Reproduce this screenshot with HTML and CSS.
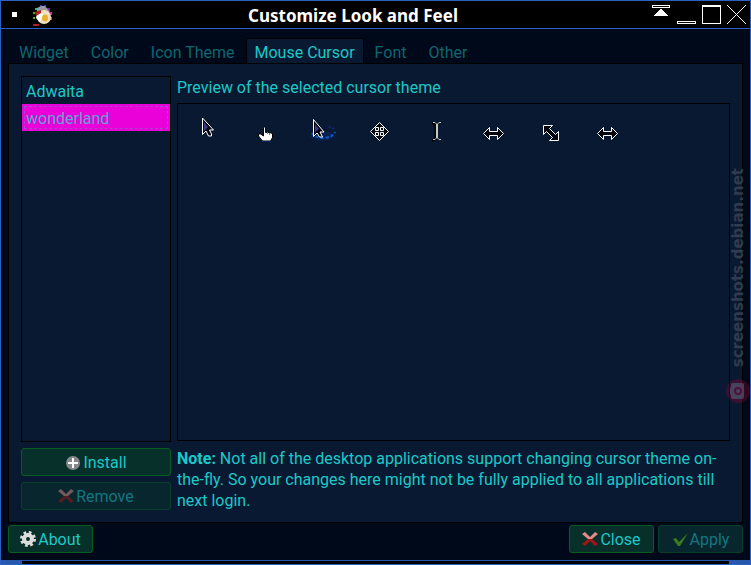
FILE: index.html
```html
<!DOCTYPE html>
<html lang="en">
<head>
    <meta charset="UTF-8">
    <meta name="viewport" content="width=device-width, initial-scale=1.0">
    <title>Customize Look and Feel</title>
    <link rel="stylesheet" href="styles.css">
</head>
<body>
    <div class="window">
        <header class="titlebar">
            <div class="title-left">
                <span class="sticky"></span>
                <svg class="app-icon" width="22" height="22" viewBox="0 0 22 22">
                    <path fill="#2ab5a8" d="M3 4h2v2H3z"/>
                    <path fill="#1838d0" d="M8 1h2v2H8zM12 1h2v2h-2z"/>
                    <path fill="#7a22b0" d="M15 4h3v3h-3z"/>
                    <path fill="#58b010" d="M1 8h2v2H1zM1 13h2v2H1z"/>
                    <path fill="#d820a0" d="M18 8h2v3h-2z"/>
                    <path fill="#d85a20" d="M18 13h2v3h-2z"/>
                    <path fill="#9a9aa0" d="M5 4l4-2 4 0 5 6-4 4-9-3z"/>
                    <circle cx="12" cy="13" r="7" fill="#f0e2c0"/>
                    <ellipse cx="13" cy="14" rx="3" ry="3.5" fill="#e8b030"/>
                    <path fill="#fff" d="M5 9l6 1-3 8-4-4z"/>
                    <path fill="#b02020" d="M3 8l6-2v3l-5 3zM1 20h6v2H1z"/>
                </svg>
            </div>
            <h1 class="title">Customize Look and Feel</h1>
            <div class="title-buttons">
                <button class="win-button" type="button" aria-label="Shade">
                    <svg width="19" height="19" viewBox="0 0 19 19" shape-rendering="crispEdges">
                        <path fill="none" stroke="#fff" d="M.5.5h17v2H.5z"/>
                        <path fill="#fff" d="M8 4h2v1h1v1h1v1h1v1h1v1h1v1h1v1H2v-1h1V9h1V8h1V7h1V6h1V5h1z"/>
                    </svg>
                </button>
                <button class="win-button" type="button" aria-label="Minimize">
                    <svg width="19" height="19" viewBox="0 0 19 19" shape-rendering="crispEdges">
                        <path fill="none" stroke="#fff" d="M.5 16.5h18v2H.5z"/>
                    </svg>
                </button>
                <button class="win-button" type="button" aria-label="Maximize">
                    <svg width="19" height="19" viewBox="0 0 19 19" shape-rendering="crispEdges">
                        <path fill="none" stroke="#fff" d="M.5.5h18v18H.5zM0 1.5h19"/>
                    </svg>
                </button>
                <button class="win-button" type="button" aria-label="Close window">
                    <svg width="19" height="19" viewBox="0 0 19 19" shape-rendering="crispEdges">
                        <path fill="none" stroke="#fff" d="M0 0l19 19M19 0L0 19"/>
                    </svg>
                </button>
            </div>
        </header>

        <main class="content">
            <nav class="tabs" role="tablist">
                <button class="tab" type="button" role="tab">Widget</button>
                <button class="tab" type="button" role="tab">Color</button>
                <button class="tab" type="button" role="tab">Icon Theme</button>
                <button class="tab active" type="button" role="tab" aria-selected="true">Mouse Cursor</button>
                <button class="tab" type="button" role="tab">Font</button>
                <button class="tab" type="button" role="tab">Other</button>
            </nav>

            <section class="panel">
                <div class="themes">
                    <ul class="theme-list">
                        <li class="theme">Adwaita</li>
                        <li class="theme selected">wonderland</li>
                    </ul>
                    <button class="button" type="button">
                        <svg class="icon" width="16" height="16" viewBox="0 0 16 16">
                            <circle cx="8" cy="9" r="7" fill="#85888a"/>
                            <path stroke="#fff" stroke-width="2" d="M8 4v10M3 9h10"/>
                        </svg>
                        Install
                    </button>
                    <button class="button" type="button" disabled>
                        <svg class="icon" width="16" height="16" viewBox="0 0 16 16">
                            <path fill="#e08a8a" d="M0 3l3-2 5 5 5-5 3 2-6 5H6z"/>
                            <path fill="#a01414" d="M6 8h4l6 5-3 2-5-5-5 5-3-2z"/>
                        </svg>
                        Remove
                    </button>
                </div>

                <div class="details">
                    <h2 class="label">Preview of the selected cursor theme</h2>
                    <div class="preview">
                        <svg width="57" height="50" viewBox="0 0 57 50">
                            <path class="cursor" d="M24.5 14v16.500l3.500-3.500 2.500 5h3v-2l-2-4h4z"/>
                            <path fill="#3a3a88" d="M26 18l4 5-4 4z"/>
                        </svg>
                        <svg width="57" height="50" viewBox="0 0 57 50">
                            <path fill="#1040a8" d="M27 36h9v2h-9z"/>
                            <path fill="#fff" stroke="#000" d="M28.500 23.500q1-1 2 0v5h4l3 1v4l-2 3.500h-8l-4-5v-2h2l3 2z"/>
                            <path stroke="#777" d="M32.500 28v2M34.500 29v2"/>
                        </svg>
                        <svg width="57" height="50" viewBox="0 0 57 50">
                            <ellipse cx="30" cy="32" rx="12" ry="5" fill="#0838a0" opacity=".25"/>
                            <path fill="none" stroke="#0a5ad0" stroke-width="2" stroke-dasharray="3 2" d="M20 29q3 5 12 5 9-1 11-6"/>
                            <path fill="none" stroke="#12257a" stroke-width="2" stroke-dasharray="2 2" d="M42 25q-2-2-7-2"/>
                            <path class="cursor" d="M21.500 15.500v17l3.500-3.500 2.500 4h3l-2.500-5h4z"/>
                            <path fill="#3a3a88" d="M23 20l4 5-4 3z"/>
                        </svg>
                        <svg width="57" height="50" viewBox="0 0 57 50">
                            <path class="cursor" d="M30.500 18.500l9 9-9 9-9-9z"/>
                            <path fill="none" stroke="#fff" d="M26.500 23.500h3v3h-3zM31.500 23.500h3v3h-3zM26.500 28.500h3v3h-3zM31.500 28.500h3v3h-3z"/>
                        </svg>
                        <svg width="57" height="50" viewBox="0 0 57 50">
                            <path fill="none" stroke="#000" stroke-width="2" d="M26 19.500h2l2 2M29.500 20v15M26 36.500h2l2-2"/>
                            <path fill="none" stroke="#c8c8c0" stroke-width="2" d="M31 20v14"/>
                            <path fill="none" stroke="#c8c8c0" d="M27 18.500h2l2 2 2-2h2M27 35.500h2l2-2 2 2h2"/>
                        </svg>
                        <svg width="57" height="50" viewBox="0 0 57 50">
                            <path class="cursor" d="M20.500 29.500l6-6v4h8v-4l6 6-6 6v-4h-8v4z"/>
                        </svg>
                        <svg width="57" height="50" viewBox="0 0 57 50">
                            <path class="cursor" d="M23.500 21.500h9l-3 3 6 6 3-3v9h-9l3-3-6-6-3 3z"/>
                        </svg>
                        <svg width="57" height="50" viewBox="0 0 57 50">
                            <path class="cursor" d="M20.500 29.500l6-6v4h8v-4l6 6-6 6v-4h-8v4z"/>
                        </svg>
                    </div>
                    <p class="note"><strong>Note:</strong> Not all of the desktop applications support changing cursor theme on-the-fly. So your changes here might not be fully applied to all applications till next login.</p>
                </div>
            </section>

            <footer class="actions">
                <button class="button about" type="button">
                    <svg class="icon" width="16" height="16" viewBox="0 0 16 16">
                        <circle cx="8" cy="8" r="6.500" fill="none" stroke="#ddd" stroke-width="3" stroke-dasharray="2.600 2.505"/>
                        <circle cx="8" cy="8" r="4" fill="none" stroke="#ddd" stroke-width="4"/>
                    </svg>
                    About
                </button>
                <button class="button" type="button">
                    <svg class="icon" width="16" height="16" viewBox="0 0 16 16">
                        <path fill="#e08a8a" d="M0 3l3-2 5 5 5-5 3 2-6 5H6z"/>
                        <path fill="#a01414" d="M6 8h4l6 5-3 2-5-5-5 5-3-2z"/>
                    </svg>
                    Close
                </button>
                <button class="button" type="button" disabled>
                    <svg class="icon" width="16" height="16" viewBox="0 0 16 16">
                        <path fill="#70d010" d="M1 8l3-1 3 4 9-9-8 13H6z"/>
                    </svg>
                    Apply
                </button>
            </footer>
        </main>
        <div class="handle"></div>

        <div class="watermark">
            <span class="watermark-text">screenshots.debian.net</span>
            <svg width="24" height="24" viewBox="0 0 24 24">
                <circle cx="12" cy="12" r="12" fill="#a8003c" opacity=".3"/>
                <path fill="#55647c" d="M7 4h9q2 0 2 2v12q0 2-2 2H7q-2 0-2-2v-2l-1-1V9l1-1V6q0-2 2-2z" opacity=".6"/>
                <circle cx="12" cy="12" r="3" fill="none" stroke="#4c1238" stroke-width="2"/>
            </svg>
        </div>
    </div>
</body>
</html>
```
FILE: styles.css
```css
* {
    box-sizing: border-box;
}
body {
    margin: 0;
    font-family: Roboto, "Noto Sans", sans-serif;
    font-size: 16px;
    line-height: 21px;
    color: #1dc8c8;
    background: #000;
}
button {
    font: inherit;
    color: inherit;
}
.window {
    position: relative;
    display: flex;
    flex-direction: column;
    min-height: 100vh;
    background: #000919;
    border: 1px solid #2b61c2;
}
.titlebar {
    display: flex;
    align-items: center;
    height: 28px;
    background: #000;
    border-bottom: 1px solid #2b61c2;
}
.title-left {
    display: flex;
    align-items: center;
    gap: 15px;
    padding-left: 11px;
}
.sticky {
    width: 5px;
    height: 5px;
    background: #fff;
}
.title {
    flex: 1;
    margin: 0;
    padding-top: 2px;
    font-family: "Noto Sans", sans-serif;
    font-size: 17px;
    font-weight: bold;
    text-align: center;
    color: #fff;
}
.title-buttons {
    display: flex;
    justify-content: flex-end;
    gap: 6px;
    padding-right: 4px;
}
.win-button {
    display: flex;
    padding: 0;
    background: none;
    border: none;
}
.content {
    flex: 1;
    display: flex;
    flex-direction: column;
    padding: 9px 7px 7px;
}
.tabs {
    display: flex;
    align-items: flex-end;
}
.tab {
    height: 26px;
    margin-bottom: -1px;
    padding: 2px 10px 0;
    background: none;
    border: 1px solid transparent;
    border-bottom: none;
    color: #0e6670;
}
.tab.active {
    padding: 2px 8px 0;
    background: #091931;
    border-color: #000;
    color: #1dc8c8;
}
.panel {
    flex: 1;
    display: flex;
    gap: 6px;
    padding: 12px 12px 11px;
    background: #091931;
    border: 1px solid #000;
}
.themes {
    display: flex;
    flex-direction: column;
    gap: 6px;
    width: 150px;
    padding-bottom: 1px;
}
.theme-list {
    flex: 1;
    margin: 0;
    padding: 0;
    list-style: none;
    border: 1px solid #000;
}
.theme {
    padding: 4px 3px 2px;
    border: 1px solid transparent;
    line-height: 19px;
}
.theme.selected {
    background: #ea00d9;
    color: #58a8d4;
    outline: 1px dashed #a348d0;
    outline-offset: -3px;
}
.button {
    display: flex;
    align-items: center;
    justify-content: center;
    gap: 2px;
    min-width: 85px;
    height: 28px;
    padding: 0 8px;
    background: #08302b;
    border: 1px solid #075c22;
    border-radius: 3px;
}
.button:disabled {
    background: #08262e;
    border-color: #083f2a;
    color: #137680;
}
.button:disabled .icon {
    opacity: 0.5;
}
.details {
    flex: 1;
    display: flex;
    flex-direction: column;
}
.label {
    margin: 0 0 5px;
    padding-top: 1px;
    font-size: 16px;
    font-weight: normal;
}
.preview {
    flex: 1;
    display: flex;
    flex-wrap: wrap;
    align-content: flex-start;
    border: 1px solid #000;
}
.cursor {
    fill: #050510;
    stroke: #fff;
}
.note {
    margin: 7px 0 0;
}
.actions {
    display: flex;
    gap: 4px;
    padding-top: 2px;
}
.about {
    margin-right: auto;
}
.handle {
    height: 4px;
    background: #000;
    border: solid #2858ad;
    border-width: 1px 21px 0;
}
.watermark {
    position: absolute;
    right: 0;
    top: 167px;
    display: flex;
    flex-direction: column;
    align-items: center;
    gap: 12px;
    pointer-events: none;
}
.watermark-text {
    writing-mode: vertical-rl;
    transform: rotate(180deg);
    font-family: "DejaVu Sans", sans-serif;
    font-size: 15px;
    line-height: 20px;
    font-weight: bold;
    color: #2f3b4e;
}
```
